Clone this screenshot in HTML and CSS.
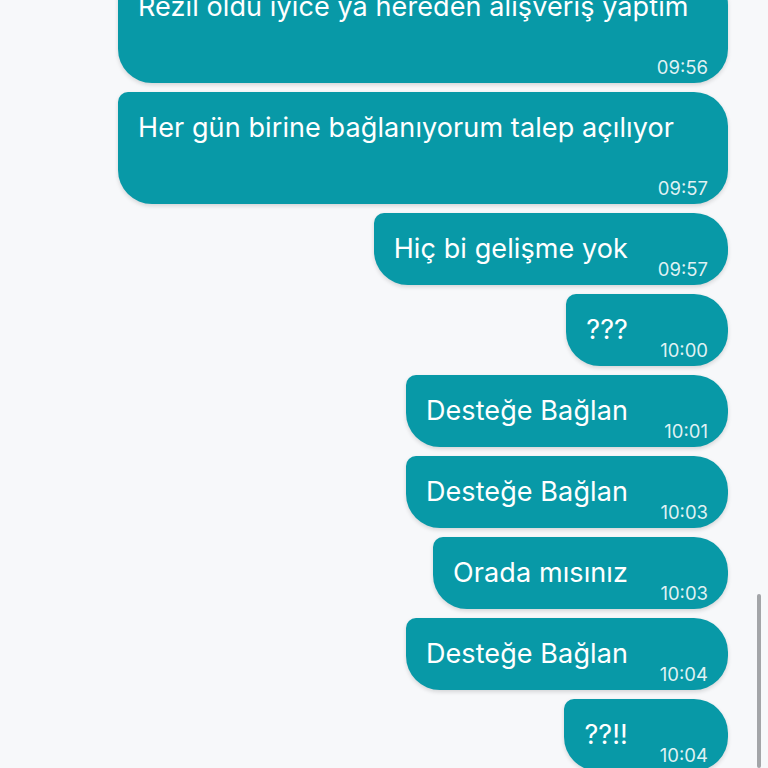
FILE: index.html
```html
<!DOCTYPE html>
<html lang="tr">
<head>
<meta charset="utf-8">
<title>Sohbet</title>
<link rel="stylesheet" href="styles.css">
</head>
<body>
<div class="chat">
  <div class="messages">
    <div class="bubble"><span class="text">Rezil oldu iyice ya hereden alişveriş yaptım</span><span class="spacer"></span><span class="time">09:56</span></div>
    <div class="bubble"><span class="text">Her gün birine bağlanıyorum talep açılıyor</span><span class="spacer"></span><span class="time">09:57</span></div>
    <div class="bubble"><span class="text">Hiç bi gelişme yok</span><span class="spacer"></span><span class="time">09:57</span></div>
    <div class="bubble"><span class="text">???</span><span class="spacer"></span><span class="time">10:00</span></div>
    <div class="bubble"><span class="text">Desteğe Bağlan</span><span class="spacer"></span><span class="time">10:01</span></div>
    <div class="bubble"><span class="text">Desteğe Bağlan</span><span class="spacer"></span><span class="time">10:03</span></div>
    <div class="bubble"><span class="text">Orada mısınız</span><span class="spacer"></span><span class="time">10:03</span></div>
    <div class="bubble"><span class="text">Desteğe Bağlan</span><span class="spacer"></span><span class="time">10:04</span></div>
    <div class="bubble"><span class="text">??!!</span><span class="spacer"></span><span class="time">10:04</span></div>
  </div>
  <div class="scrollbar"></div>
</div>
</body>
</html>
```
FILE: styles.css
```css
html, body {
  margin: 0;
  padding: 0;
  background: #f7f8fa;
}
body {
  font-family: Inter, "Noto Sans", sans-serif;
  color: #ffffff;
}
.chat {
  position: relative;
  height: 768px;
  overflow: hidden;
  display: flex;
  flex-direction: column;
  justify-content: flex-end;
}
.messages {
  display: flex;
  flex-direction: column;
  align-items: flex-end;
  gap: 9px;
  padding-right: 40px;
  margin-bottom: -3px;
}
.bubble {
  position: relative;
  box-sizing: border-box;
  max-width: 610px;
  padding: 16px 20px;
  background: #0899a7;
  border-radius: 10px 34px 34px 34px;
  box-shadow: 0 2px 4px rgba(0, 0, 0, 0.14);
  font-size: 27px;
  letter-spacing: 0.1px;
  line-height: 40px;
}
.spacer {
  display: inline-block;
  width: 80px;
  height: 1px;
}
.time {
  position: absolute;
  right: 20px;
  bottom: 6px;
  font-size: 18.5px;
  letter-spacing: 0;
  line-height: 20px;
  color: rgba(255, 255, 255, 0.88);
}
.scrollbar {
  position: absolute;
  right: 7px;
  bottom: 0;
  width: 4px;
  height: 174px;
  border-radius: 2px;
  background: #a3a5a8;
}
```
